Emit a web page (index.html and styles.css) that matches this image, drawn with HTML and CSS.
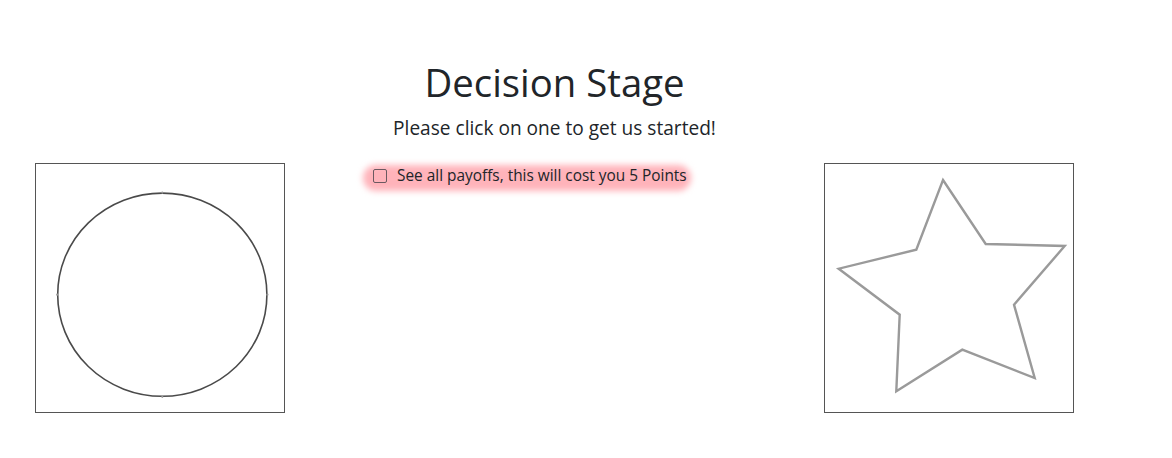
FILE: index.html
```html
<!DOCTYPE html>
<html lang="en">
<head>
<meta charset="utf-8">
<title>Decision Stage</title>
<link rel="stylesheet" href="styles.css">
</head>
<body>
<div class="page">
  <div class="side">
    <div class="choice">
      <svg width="248" height="248" viewBox="0 0 248 248">
        <ellipse cx="126.3" cy="130.7" rx="104.6" ry="101.6" fill="none" stroke="#4a4a4a" stroke-width="1.6"/>
        <circle cx="126.3" cy="28.6" r="1.1" fill="#999"/>
        <circle cx="126.3" cy="232.8" r="1.1" fill="#999"/>
        <circle cx="21.2" cy="130.7" r="1.1" fill="#999"/>
        <circle cx="231.4" cy="130.7" r="1.1" fill="#999"/>
      </svg>
    </div>
  </div>
  <div class="middle">
    <h1 class="title">Decision Stage</h1>
    <p class="lead">Please click on one to get us started!</p>
    <label class="peek">
      <span class="glow"></span>
      <input type="checkbox" class="box">
      <span class="peek-text">See all payoffs, this will cost you 5 Points</span>
    </label>
  </div>
  <div class="side">
    <div class="choice">
      <svg width="248" height="248" viewBox="0 0 248 248">
        <polygon points="118,16 160.7,80 239.7,82 189,140.7 209.7,214 137.3,185.7 71.3,227.3 74.7,150.7 13.7,104.7 91.3,85.7" fill="none" stroke="#9a9a9a" stroke-width="2.4" stroke-linejoin="miter"/>
      </svg>
    </div>
  </div>
</div>
</body>
</html>
```
FILE: styles.css
```css
html, body {
  margin: 0;
  padding: 0;
  background: #fff;
}
body {
  font-family: "Open Sans", "Noto Sans", sans-serif;
  color: #212529;
}
.page {
  display: flex;
  padding-left: 35px;
  align-items: flex-start;
}
.side {
  width: 250px;
  flex: none;
  padding-top: 163px;
}
.choice {
  width: 248px;
  height: 248px;
  border: 1px solid #555;
}
.choice svg {
  display: block;
}
.middle {
  width: 539px;
  flex: none;
  padding-top: 58px;
}
.title {
  margin: 0;
  text-align: center;
  font-weight: 400;
  font-size: 38.3px;
  line-height: 48px;
}
.lead {
  margin: 9px 0 0;
  text-align: center;
  font-size: 19.1px;
  line-height: 26px;
}
.peek {
  position: relative;
  display: inline-flex;
  align-items: center;
  margin: 25px 0 0 86px;
  font-size: 15.4px;
  line-height: 20px;
}
.glow {
  position: absolute;
  left: -8px;
  right: -4px;
  top: -1px;
  bottom: -5px;
  background: #ffb3ba;
  border-radius: 14px;
  filter: blur(3px);
  z-index: 0;
}
.box {
  position: relative;
  z-index: 1;
  appearance: none;
  width: 14px;
  height: 14px;
  margin: 0 10px 0 2px;
  border: 1.5px solid #6b5960;
  border-radius: 2px;
  background: transparent;
}
.peek-text {
  position: relative;
  z-index: 1;
}
```
